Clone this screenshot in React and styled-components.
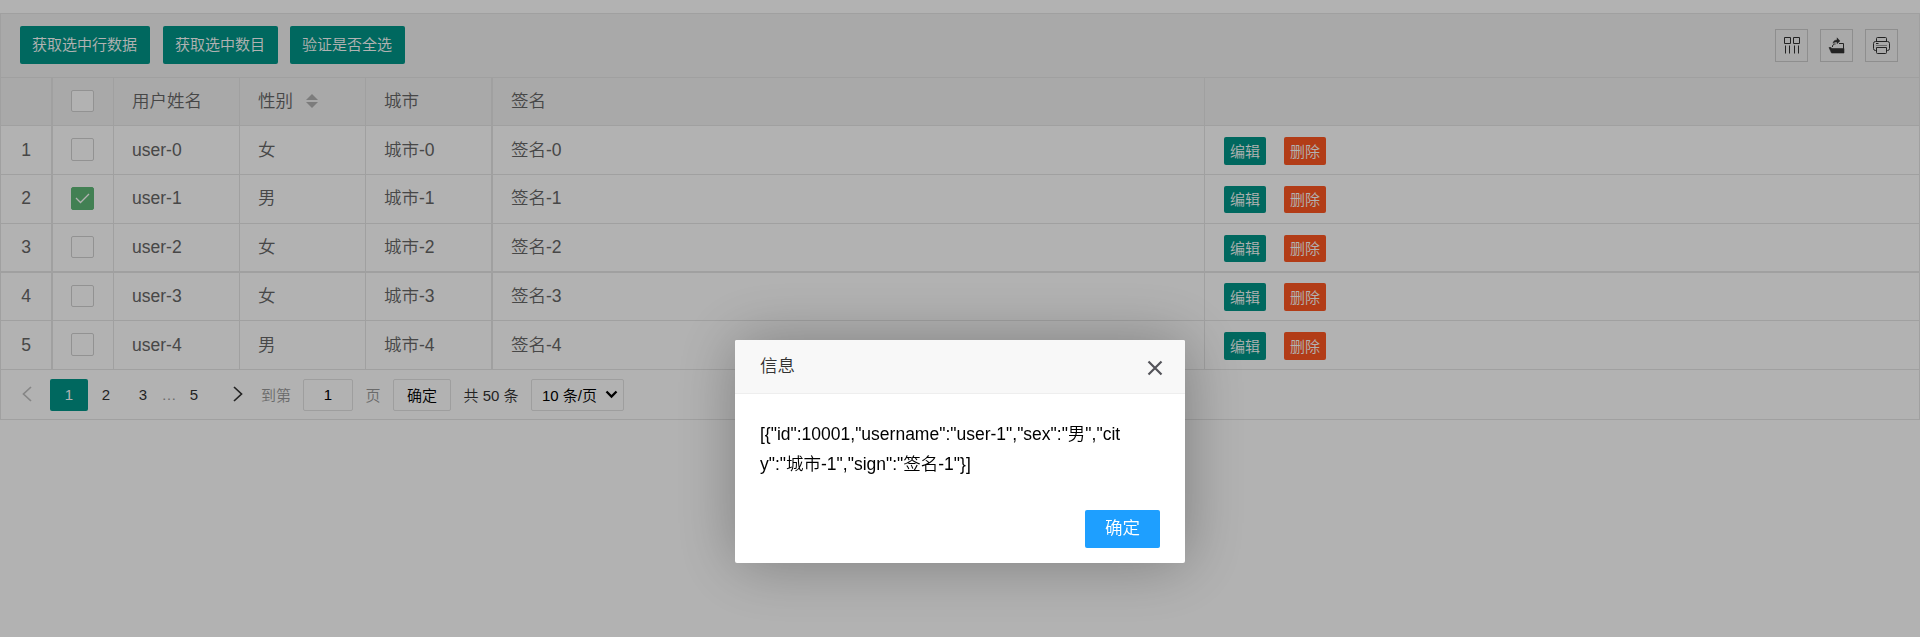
import React from 'react';
import styled, { createGlobalStyle } from 'styled-components';

const GlobalStyle = createGlobalStyle`
  *, *::before, *::after { box-sizing: border-box; }
  html, body { margin: 0; padding: 0; height: 637px; overflow: hidden; background: #fff; }
  body, button, input, select {
    font-family: "Liberation Sans", "Noto Sans CJK SC", sans-serif;
    font-weight: 350;
  }
`;

const Page = styled.main`
  height: 637px;
  padding-top: 13px;
`;

const TableView = styled.section`
  height: 407px;
  border: 1px solid #e6e6e6;
  display: flex;
  flex-direction: column;
`;

const Toolbar = styled.header`
  display: flex;
  align-items: flex-start;
  height: 64px;
  padding: 12px 21px 0 19px;
  background: #f2f2f2;
  border-bottom: 1px solid #e6e6e6;
`;

const ToolButton = styled.button`
  width: ${(p) => p.$width}px;
  height: 38px;
  margin-right: ${(p) => p.$gap}px;
  padding: 0 1px 0 0;
  border: 0;
  border-radius: 2px;
  background: #009688;
  color: #fff;
  font-size: 15px;
  line-height: 38px;
  white-space: nowrap;
`;

const ToolIcons = styled.div`
  display: flex;
  gap: 12px;
  margin-left: auto;
  padding-top: 3px;
`;

const IconBox = styled.button`
  display: flex;
  align-items: center;
  justify-content: center;
  width: 33px;
  height: 33px;
  padding: 0;
  border: 1px solid #ccc;
  background: transparent;
  color: #333;
`;

const Row = styled.div`
  display: grid;
  grid-template-columns: 52px 61px 126px 126px 127px 712px 1fr;
  height: ${(p) => p.$height}px;
  background: ${(p) => (p.$head ? '#f2f2f2' : '#fff')};
  border-bottom: ${(p) => p.$line || 1}px solid #e6e6e6;
`;

const Cell = styled.div`
  display: flex;
  align-items: center;
  justify-content: ${(p) => (p.$center ? 'center' : 'flex-start')};
  min-width: 0;
  padding: 0 ${(p) => (p.$center ? 0 : 18)}px ${(p) => p.$lift || 0}px;
  border-right: ${(p) => p.$line ?? 1}px solid #e6e6e6;
  color: #666;
  font-size: 17.5px;
  line-height: 35px;
  white-space: nowrap;
`;

const CheckCell = styled(Cell)`
  align-items: flex-start;
  justify-content: flex-start;
  padding: 12px 0 0 18px;
`;

const ActionCell = styled(Cell)`
  align-items: flex-start;
  padding: ${(p) => p.$top}px 0 0 19px;
  border-right: 0;
`;

const CheckBox = styled.span`
  display: flex;
  align-items: center;
  justify-content: center;
  width: 23px;
  height: ${(p) => p.$height}px;
  border: 1px solid ${(p) => (p.$checked ? '#5fb878' : '#d2d2d2')};
  border-radius: 2px;
  background: ${(p) => (p.$checked ? '#5fb878' : '#fff')};
`;

const SortArrows = styled.span`
  display: flex;
  flex-direction: column;
  gap: 2px;
  margin: 0 0 1px 13px;

  &::before, &::after {
    content: '';
    border: 6.5px solid transparent;
  }
  &::before { border-top: 0; border-bottom: 6px solid #b2b2b2; }
  &::after { border-bottom: 0; border-top: 6px solid #b2b2b2; }
`;

const RowButton = styled.button`
  width: 42px;
  height: ${(p) => p.$height}px;
  margin-right: 18px;
  padding: 0;
  border: 0;
  border-radius: 2px;
  background: ${(p) => (p.$danger ? '#ff5722' : '#009688')};
  color: #fff;
  font-size: 15px;
  line-height: ${(p) => p.$height - 1}px;
`;

const Pager = styled.nav`
  display: flex;
  align-items: center;
  height: 49px;
  padding: 0 0 0 11px;
  font-size: 15px;
`;

const PageItem = styled.span`
  display: flex;
  align-items: center;
  justify-content: center;
  width: ${(p) => p.$width}px;
  height: 32px;
  padding-bottom: 1px;
  border-radius: 2px;
  background: ${(p) => (p.$active ? '#009688' : 'transparent')};
  color: ${(p) => (p.$active ? '#fff' : p.$muted ? '#999' : '#333')};
  white-space: nowrap;
`;

const PageInput = styled.input`
  width: 50px;
  height: 32px;
  margin: 0 12px;
  padding: 0;
  border: 1px solid #e2e2e2;
  border-radius: 2px;
  background: #fff;
  color: #000;
  font-size: 15px;
  text-align: center;
`;

const GoButton = styled.button`
  width: 58px;
  height: 32px;
  margin: 0 12px;
  padding: 0;
  border: 1px solid #e2e2e2;
  border-radius: 2px;
  background: #fff;
  color: #000;
  font-size: 15px;
`;

const LimitSelect = styled.div`
  display: flex;
  align-items: center;
  justify-content: space-between;
  width: 93px;
  height: 32px;
  margin-left: 12px;
  padding: 0 5px 0 10px;
  border: 1px solid #e2e2e2;
  border-radius: 2px;
  color: #000;
  white-space: nowrap;
`;

const Shade = styled.div`
  position: fixed;
  inset: 0;
  background: rgba(0, 0, 0, 0.3);
`;

const Dialog = styled.section`
  position: fixed;
  top: 340px;
  left: 735px;
  display: flex;
  flex-direction: column;
  width: 450px;
  height: 223px;
  border-radius: 2px;
  background: #fff;
  box-shadow: 1px 1px 62px rgba(0, 0, 0, 0.3);
`;

const DialogTitle = styled.header`
  display: flex;
  align-items: center;
  justify-content: space-between;
  height: 54px;
  padding: 0 22px 0 25px;
  border-bottom: 1px solid #eee;
  border-radius: 2px 2px 0 0;
  background: #f8f8f8;
  color: #333;
  font-size: 17.5px;

  span { margin-top: -5px; }
  svg { margin-top: 2px; }
`;

const DialogBody = styled.p`
  flex: 1;
  margin: 0;
  padding: 25px;
  color: #000;
  font-size: 17.5px;
  line-height: 30px;
  white-space: nowrap;
`;

const DialogFooter = styled.footer`
  display: flex;
  justify-content: flex-end;
  padding: 0 25px 15px;
`;

const ConfirmButton = styled.button`
  width: 75px;
  height: 38px;
  padding: 0 0 5px;
  border: 0;
  border-radius: 2px;
  background: #1e9fff;
  color: #fff;
  font-size: 17.5px;
`;

const ColumnsIcon = () => (
  <svg width="17" height="17" viewBox="0 0 17 17" fill="none" stroke="currentColor">
    <path d="M1.500.5h6v6h-6zM10.500.5h6v6h-6zM2.500 8.500v8M6.500 8.500v8M11.500 8.500v8M15.500 8.500v8" />
  </svg>
);

const ExportIcon = () => (
  <svg width="17" height="17" viewBox="0 0 17 17">
    <path d="M1 10.500h2l1 1h12v4.500H3.500z" fill="currentColor" stroke="currentColor" strokeWidth=".6" />
    <path d="M11 6.500h4.500v9" fill="none" stroke="currentColor" />
    <path d="M4.500 10V8.500l2-1.500h1" fill="none" stroke="currentColor" />
    <path d="M5 6.500C5 4 7 3 9 3V.8L12 4 9 6.800V5C7.500 5 6 5.200 5 6.500z" fill="currentColor" stroke="currentColor" strokeWidth=".4" />
  </svg>
);

const PrintIcon = () => (
  <svg width="17" height="17" viewBox="0 0 17 17" fill="none" stroke="currentColor">
    <path d="M3.500 4.500v-3q0-1 1-1h8q1 0 1 1v3M3.500 13.500h-1q-2 0-2-2v-5q0-2 2-2h12q2 0 2 2v5q0 2-2 2h-1M3.500 10.500h10v5q0 1-1 1h-8q-1 0-1-1zM3 6.500h2.500" />
    <path d="M3 8.500h11" strokeOpacity=".45" />
  </svg>
);

const CheckMark = () => (
  <svg width="15" height="11" viewBox="0 0 15 11" fill="none" stroke="#fff" strokeWidth="1.300">
    <path d="M1 5l4.500 4.500L14 1" />
  </svg>
);

const Arrow = ({ left }) => (
  <svg width="10" height="16" viewBox="0 0 10 16" fill="none" stroke={left ? '#c0c0c0' : '#333'} strokeWidth="1.700">
    <path d={left ? 'M9 1L1.500 8L9 15' : 'M1 1l7.500 7L1 15'} />
  </svg>
);

const Chevron = () => (
  <svg width="13" height="9" viewBox="0 0 13 9" fill="none" stroke="#000" strokeWidth="2.300">
    <path d="M1.500 1.500l5 5 5-5" />
  </svg>
);

const CloseIcon = () => (
  <svg width="16" height="16" viewBox="0 0 16 16" stroke="#54545a" strokeWidth="2.200">
    <path d="M1.500 1.500l13 13M14.500 1.500l-13 13" />
  </svg>
);

const users = [
  { sex: '女', height: 49, box: 23, button: 28, top: 11, lift: 0 },
  { sex: '男', height: 49, box: 23, button: 27, top: 11, lift: 2, checked: true },
  { sex: '女', height: 49, box: 22, button: 27, top: 11, lift: 1, line: 2 },
  { sex: '女', height: 48, box: 22, button: 28, top: 10, lift: 1 },
  { sex: '男', height: 49, box: 23, button: 28, top: 11, lift: 0 },
];

export default function App() {
  return (
    <>
      <GlobalStyle />
      <Page>
        <TableView>
          <Toolbar>
            <ToolButton $width={130} $gap={13}>获取选中行数据</ToolButton>
            <ToolButton $width={115} $gap={12}>获取选中数目</ToolButton>
            <ToolButton $width={115} $gap={0}>验证是否全选</ToolButton>
            <ToolIcons>
              <IconBox aria-label="筛选列"><ColumnsIcon /></IconBox>
              <IconBox aria-label="导出"><ExportIcon /></IconBox>
              <IconBox aria-label="打印"><PrintIcon /></IconBox>
            </ToolIcons>
          </Toolbar>
          <Row $head $height={48}>
            <Cell $center $line={2} />
            <CheckCell><CheckBox $height={22} /></CheckCell>
            <Cell $lift={1}>用户姓名</Cell>
            <Cell $lift={1}>性别<SortArrows /></Cell>
            <Cell $lift={1} $line={2}>城市</Cell>
            <Cell $lift={1}>签名</Cell>
            <Cell $line={0} />
          </Row>
          {users.map((u, i) => (
            <Row key={i} $height={u.height} $line={u.line}>
              <Cell $center $line={2} $lift={u.lift}>{i + 1}</Cell>
              <CheckCell>
                <CheckBox $height={u.box} $checked={u.checked}>{u.checked && <CheckMark />}</CheckBox>
              </CheckCell>
              <Cell $lift={u.lift}>user-{i}</Cell>
              <Cell $lift={u.lift}>{u.sex}</Cell>
              <Cell $lift={u.lift} $line={2}>城市-{i}</Cell>
              <Cell $lift={u.lift}>签名-{i}</Cell>
              <ActionCell $top={u.top}>
                <RowButton $height={u.button}>编辑</RowButton>
                <RowButton $height={u.button} $danger>删除</RowButton>
              </ActionCell>
            </Row>
          ))}
          <Pager>
            <PageItem $width={29}><Arrow left /></PageItem>
            <PageItem $width={9} />
            <PageItem $width={38} $active>1</PageItem>
            <PageItem $width={36}>2</PageItem>
            <PageItem $width={38}>3</PageItem>
            <PageItem $width={14} $muted>…</PageItem>
            <PageItem $width={36}>5</PageItem>
            <PageItem $width={14} />
            <PageItem $width={23}><Arrow /></PageItem>
            <PageItem $width={12} />
            <PageItem $width={30} $muted>到第</PageItem>
            <PageInput defaultValue="1" />
            <PageItem $width={16} $muted>页</PageItem>
            <GoButton>确定</GoButton>
            <PageItem $width={56}>共 50 条</PageItem>
            <LimitSelect>10 条/页<Chevron /></LimitSelect>
          </Pager>
        </TableView>
      </Page>
      <Shade />
      <Dialog role="dialog">
        <DialogTitle><span>信息</span><CloseIcon /></DialogTitle>
        <DialogBody>
          {'[{"id":10001,"username":"user-1","sex":"男","cit'}
          <br />
          {'y":"城市-1","sign":"签名-1"}]'}
        </DialogBody>
        <DialogFooter><ConfirmButton>确定</ConfirmButton></DialogFooter>
      </Dialog>
    </>
  );
}
